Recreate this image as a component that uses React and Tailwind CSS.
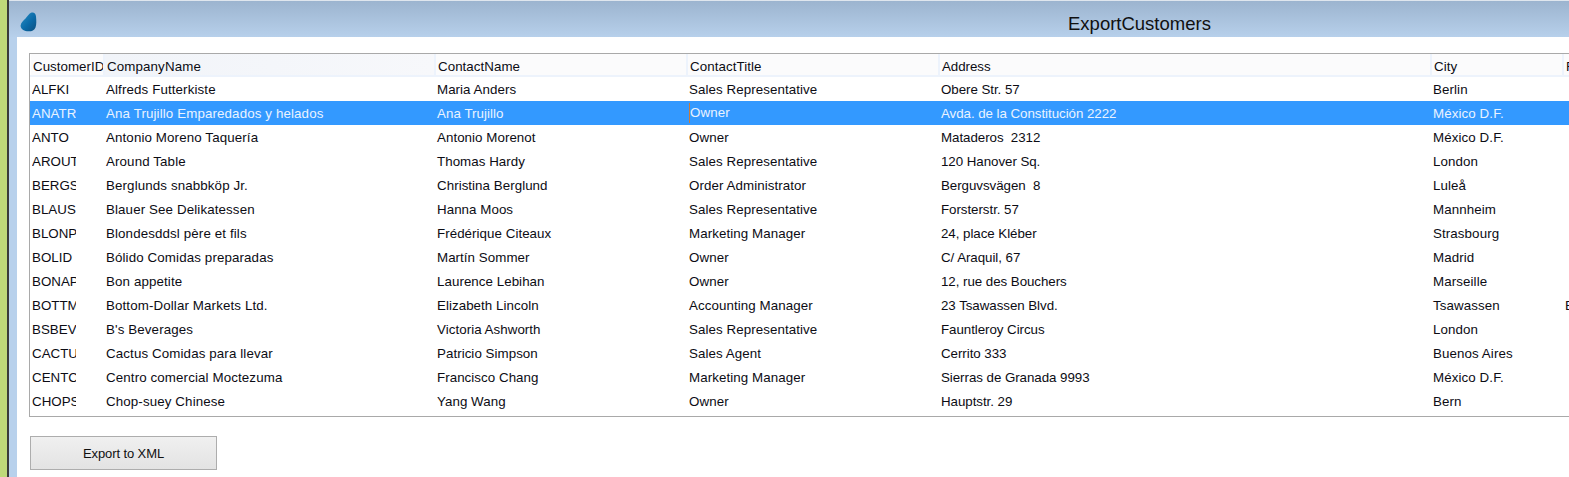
const cols = ["w-[74px]", "w-[331px]", "w-[252px]", "w-[252px]", "w-[492px]", "w-[132px]", "w-[200px]"];
const track = ["tracking-[0.02px]", "tracking-[0.12px]", "tracking-[0.05px]", "tracking-[0.08px]", "tracking-[-0.05px]", "tracking-[0.1px]", "tracking-[0.1px]"];
const headers = ["CustomerID", "CompanyName", "ContactName", "ContactTitle", "Address", "City", "Region"];
const rows = [
  ["ALFKI", "Alfreds Futterkiste", "Maria Anders", "Sales Representative", "Obere Str. 57", "Berlin", ""],
  ["ANATR", "Ana Trujillo Emparedados y helados", "Ana Trujillo", "Owner", "Avda. de la Constitución 2222", "México D.F.", ""],
  ["ANTO", "Antonio Moreno Taquería", "Antonio Morenot", "Owner", "Mataderos  2312", "México D.F.", ""],
  ["AROUT", "Around Table", "Thomas Hardy", "Sales Representative", "120 Hanover Sq.", "London", ""],
  ["BERGS", "Berglunds snabbköp Jr.", "Christina Berglund", "Order Administrator", "Berguvsvägen  8", "Luleå", ""],
  ["BLAUS", "Blauer See Delikatessen", "Hanna Moos", "Sales Representative", "Forsterstr. 57", "Mannheim", ""],
  ["BLONP", "Blondesddsl père et fils", "Frédérique Citeaux", "Marketing Manager", "24, place Kléber", "Strasbourg", ""],
  ["BOLID", "Bólido Comidas preparadas", "Martín Sommer", "Owner", "C/ Araquil, 67", "Madrid", ""],
  ["BONAP", "Bon appetite", "Laurence Lebihan", "Owner", "12, rue des Bouchers", "Marseille", ""],
  ["BOTTM", "Bottom-Dollar Markets Ltd.", "Elizabeth Lincoln", "Accounting Manager", "23 Tsawassen Blvd.", "Tsawassen", "BC"],
  ["BSBEV", "B's Beverages", "Victoria Ashworth", "Sales Representative", "Fauntleroy Circus", "London", ""],
  ["CACTU", "Cactus Comidas para llevar", "Patricio Simpson", "Sales Agent", "Cerrito 333", "Buenos Aires", ""],
  ["CENTC", "Centro comercial Moctezuma", "Francisco Chang", "Marketing Manager", "Sierras de Granada 9993", "México D.F.", ""],
  ["CHOPS", "Chop-suey Chinese", "Yang Wang", "Owner", "Hauptstr. 29", "Bern", ""],
];

function Logo() {
  return (
    <svg width="17" height="21" viewBox="0 0 17 21" className="mt-[7px] block">
      <defs>
        <linearGradient id="drop" x1="0" y1="0" x2="1" y2="1">
          <stop offset="0" stopColor="#2a8fc4" />
          <stop offset="0.55" stopColor="#0a6aa8" />
          <stop offset="1" stopColor="#0c4f80" />
        </linearGradient>
      </defs>
      <path d="M11 0.8C13.5 0 15.7 1 16 4.5C16.4 8.5 16.6 12.5 15.5 15.5C14.3 18.8 10.5 19.8 7 19.2C3 18.6 0.5 16.5 0.6 13.5C0.8 10.5 3.5 8.5 5.5 6.5C7.5 4.5 8.8 1.6 11 0.8Z" fill="url(#drop)" />
    </svg>
  );
}

export default function App() {
  return (
    <div className="flex h-[477px] w-[1569px] overflow-hidden bg-white text-[13.33px] text-[#0c0c14] font-['Liberation_Sans',Arial,sans-serif]">
      <div className="w-[7px] shrink-0 bg-[#bfd879]" />
      <div className="w-[2px] shrink-0 bg-[#3a3a3a]" />
      <div className="flex min-w-0 flex-1 flex-col">
        <div className="h-px shrink-0 bg-[#dfe6ee]" />
        <div className="flex h-[36px] shrink-0 items-center bg-gradient-to-b from-[#9cb4cf] to-[#b7d0eb] pl-[11px]">
          <Logo />
          <span className="ml-[1031px] pt-[9px] text-[18.5px] text-[#101010]">ExportCustomers</span>
        </div>
        <div className="flex min-h-0 flex-1">
          <div className="w-[8px] shrink-0 bg-[#b8d1ec]" />
          <div className="min-w-0 flex-1 pl-[12px] pt-[16px]">
            <div className="h-[364px] w-[1560px] overflow-hidden border border-[#a9a9a9]">
              <div className="flex h-[23px] border-b-2 border-[#edf3fc] pl-px">
                {headers.map((h, i) => (
                  <div
                    key={h}
                    className={`${cols[i]} ${track[i]} ${i === 1 ? "bg-gradient-to-r from-[#f1f4f9] to-[#f7f8fb]" : "bg-[#fbfbfc]"} shrink-0 overflow-hidden whitespace-pre border-r-2 border-[#edf3fc] pl-[2px] leading-[25px]`}
                  >
                    {h}
                  </div>
                ))}
              </div>
              {rows.map((r, ri) => (
                <div key={r[0]} className={`flex h-[24px] items-center pt-[2px] ${ri === 1 ? "bg-[#3399ff] text-[#eaf3ff]" : ""}`}>
                  {r.map((c, i) => (
                    <div key={i} className={`${cols[i]} ${track[i]} shrink-0 whitespace-pre pl-[2px]`}>
                      {i === 0 ? (
                        <div className="w-[44px] overflow-hidden">{c}</div>
                      ) : ri === 1 && i === 3 ? (
                        <div className="-mt-[2px] border-l border-[#c87a3a]">{c}</div>
                      ) : (
                        c
                      )}
                    </div>
                  ))}
                </div>
              ))}
            </div>
            <button className="mt-[19px] ml-[1px] block h-[34px] w-[187px] border border-[#adadad] bg-gradient-to-b from-[#f0f0f0] to-[#e3e3e3] pt-px text-[13px] tracking-[-0.1px] text-[#101010]">
              Export to XML
            </button>
          </div>
        </div>
      </div>
    </div>
  );
}
